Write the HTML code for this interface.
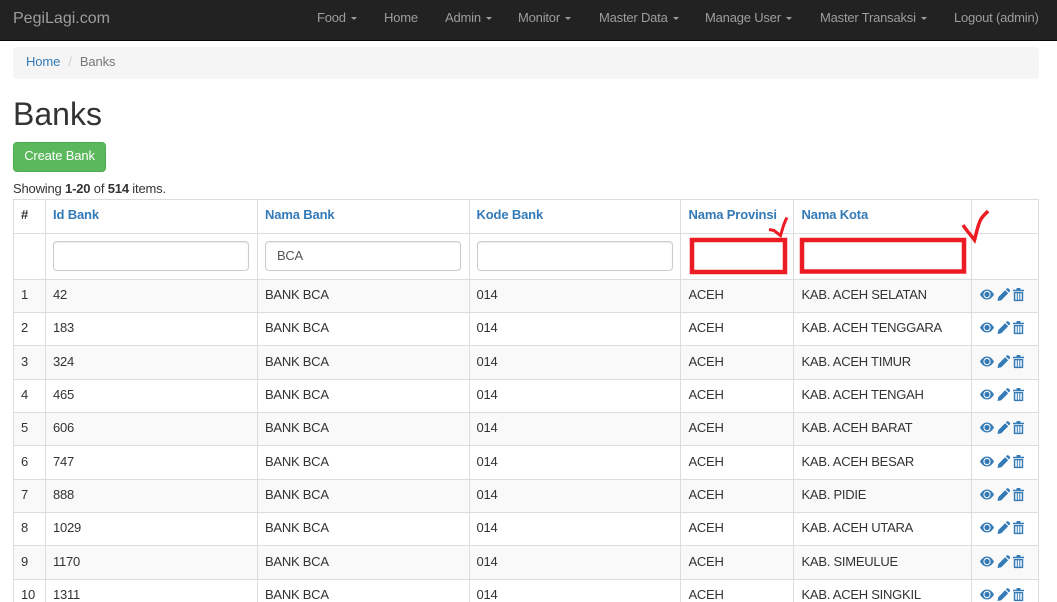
<!DOCTYPE html>
<html><head><meta charset="utf-8"><title>Banks</title>
<style>
*{box-sizing:border-box}
html,body{margin:0;padding:0;width:1057px;height:602px;overflow:hidden;background:#fff}
body{font:13px/20px "Liberation Sans",Arial,sans-serif;letter-spacing:-.25px;color:#333;position:relative}
a{color:#337ab7;text-decoration:none}
.nav{position:absolute;left:0;top:0;width:1057px;height:41px;background:#222;border-bottom:1px solid #080808}
.nav span{position:absolute;top:8px;color:#9d9d9d;white-space:nowrap;letter-spacing:-.2px}
.nav .brand{left:13px;top:9px;font-size:16px;letter-spacing:0}
.caret{display:inline-block;width:0;height:0;margin-left:2px;vertical-align:middle;border-top:3px solid #9d9d9d;border-left:3px solid transparent;border-right:3px solid transparent}
.crumb{position:absolute;left:13px;top:47px;width:1026px;height:32px;background:#f5f5f5;border-radius:4px;padding:5px 13px;color:#777;letter-spacing:-.1px}
.crumb i{font-style:normal;color:#ccc;padding:0 4.500px}
h1{position:absolute;left:13px;top:94px;margin:0;font-size:32px;line-height:40px;font-weight:500;letter-spacing:0;font-family:"Liberation Sans",Arial,sans-serif}
.btn{position:absolute;left:13px;top:142px;width:93px;height:30px;background:#5cb85c;border:1px solid #4cae4c;border-radius:4px;color:#fff;text-align:center;line-height:26px;letter-spacing:-.15px}
.sum{position:absolute;left:13px;top:179px;letter-spacing:-.18px}
table{position:absolute;left:13px;top:199px;width:1025px;border-collapse:collapse;table-layout:fixed}
td,th{border:1px solid #ddd;padding:0 0 0 7px;text-align:left;white-space:nowrap;overflow:hidden;font-weight:normal;vertical-align:middle}
td:nth-child(n+5),th:nth-child(n+5){padding-left:7.500px}
th{font-weight:bold;height:34px;padding-bottom:4px;letter-spacing:-.15px}
tr.f td{height:46px}
tr.r td{height:33px;padding-top:0;padding-bottom:2px}
tr.r.t td{height:34px}
tr.o td{background:#f9f9f9}
.inp{height:30px;width:196px;border:1px solid #ccc;border-radius:4px;background:#fff;padding:4px 11px;color:#555;box-shadow:inset 0 1px 1px rgba(0,0,0,.075);margin-top:-1px}
.ic{display:block;margin-left:.500px;position:relative;top:-.500px}
svg.o{position:absolute;left:0;top:0}
</style></head><body>
<div class="nav">
<span class="brand">PegiLagi.com</span>
<span style="left:317px">Food <b class="caret"></b></span>
<span style="left:384px">Home</span>
<span style="left:445px">Admin <b class="caret"></b></span>
<span style="left:518px">Monitor <b class="caret"></b></span>
<span style="left:599px">Master Data <b class="caret"></b></span>
<span style="left:705px">Manage User <b class="caret"></b></span>
<span style="left:820px">Master Transaksi <b class="caret"></b></span>
<span style="left:954px">Logout (admin)</span>
</div>
<div class="crumb"><a href="#">Home</a> <i>/</i> Banks</div>
<h1>Banks</h1>
<div class="btn">Create Bank</div>
<div class="sum">Showing <b>1-20</b> of <b>514</b> items.</div>
<svg width="0" height="0" style="position:absolute"><defs>
<g id="acts" fill="#337ab7">
<path fill-rule="evenodd" d="M0 7.500C2 4 4.400 2.500 7 2.500s5 1.500 7 5c-2 3.500-4.400 5-7 5s-5-1.500-7-5zM7 3.800a3.700 3.700 0 1 0 0 7.400 3.700 3.700 0 0 0 0-7.400z"/>
<path d="M1.800 7.500c.7-1 1.400-1.800 2.300-2.400a4.500 4.500 0 0 0 0 4.800C3.200 9.300 2.500 8.500 1.800 7.500zM9.900 5.100c.9.600 1.600 1.400 2.300 2.400-.7 1-1.400 1.800-2.300 2.400a4.500 4.500 0 0 0 0-4.800z"/>
<circle cx="7" cy="7.500" r="2.600"/>
<path d="M17 14l.8-3.900 6.800-6.900 3.100 3.100-6.900 6.900zM25.400 2.400l.9-.9c.5-.5 1.200-.5 1.700 0l1.300 1.300c.5.500.5 1.200 0 1.700l-.9.900z" transform="translate(.5 0)"/>
<path d="M33 2.800h3.500V1.800c0-.5.300-.8.800-.8h2.400c.5 0 .8.300.8.800v1H44v1.400H33zM33.800 5h9.400v8.300c0 .5-.3.800-.8.800h-7.800c-.5 0-.8-.3-.8-.8zM35.300 6.300v6.500h1.500V6.300zM37.800 6.300v6.500h1.500V6.300zM40.300 6.300v6.500h1.500V6.300z"/>
</g></defs></svg>
<table>
<colgroup><col style="width:32px"><col style="width:212px"><col style="width:211.500px"><col style="width:211.500px"><col style="width:113px"><col style="width:178px"><col style="width:67px"></colgroup>
<tr><th>#</th><th><a href="#">Id Bank</a></th><th><a href="#">Nama Bank</a></th><th><a href="#">Kode Bank</a></th><th><a href="#">Nama Provinsi</a></th><th><a href="#">Nama Kota</a></th><th></th></tr>
<tr class="f"><td></td><td><div class="inp"></div></td><td><div class="inp">BCA</div></td><td><div class="inp"></div></td><td></td><td></td><td></td></tr>
<tr class="r o"><td>1</td><td>42</td><td>BANK BCA</td><td>014</td><td>ACEH</td><td>KAB. ACEH SELATAN</td><td><svg class="ic" width="46" height="15"><use href="#acts"/></svg></td></tr>
<tr class="r"><td>2</td><td>183</td><td>BANK BCA</td><td>014</td><td>ACEH</td><td>KAB. ACEH TENGGARA</td><td><svg class="ic" width="46" height="15"><use href="#acts"/></svg></td></tr>
<tr class="r o t"><td>3</td><td>324</td><td>BANK BCA</td><td>014</td><td>ACEH</td><td>KAB. ACEH TIMUR</td><td><svg class="ic" width="46" height="15"><use href="#acts"/></svg></td></tr>
<tr class="r"><td>4</td><td>465</td><td>BANK BCA</td><td>014</td><td>ACEH</td><td>KAB. ACEH TENGAH</td><td><svg class="ic" width="46" height="15"><use href="#acts"/></svg></td></tr>
<tr class="r o"><td>5</td><td>606</td><td>BANK BCA</td><td>014</td><td>ACEH</td><td>KAB. ACEH BARAT</td><td><svg class="ic" width="46" height="15"><use href="#acts"/></svg></td></tr>
<tr class="r t"><td>6</td><td>747</td><td>BANK BCA</td><td>014</td><td>ACEH</td><td>KAB. ACEH BESAR</td><td><svg class="ic" width="46" height="15"><use href="#acts"/></svg></td></tr>
<tr class="r o"><td>7</td><td>888</td><td>BANK BCA</td><td>014</td><td>ACEH</td><td>KAB. PIDIE</td><td><svg class="ic" width="46" height="15"><use href="#acts"/></svg></td></tr>
<tr class="r"><td>8</td><td>1029</td><td>BANK BCA</td><td>014</td><td>ACEH</td><td>KAB. ACEH UTARA</td><td><svg class="ic" width="46" height="15"><use href="#acts"/></svg></td></tr>
<tr class="r o t"><td>9</td><td>1170</td><td>BANK BCA</td><td>014</td><td>ACEH</td><td>KAB. SIMEULUE</td><td><svg class="ic" width="46" height="15"><use href="#acts"/></svg></td></tr>
<tr class="r"><td>10</td><td>1311</td><td>BANK BCA</td><td>014</td><td>ACEH</td><td>KAB. ACEH SINGKIL</td><td><svg class="ic" width="46" height="15"><use href="#acts"/></svg></td></tr>
</table>
<svg class="o" width="1057" height="602" fill="none" stroke="#ed1c24">
<rect x="692" y="240" width="93" height="32" stroke-width="4.500"/>
<rect x="802" y="240" width="162" height="31.500" stroke-width="4.500"/>
<path d="M769 229.500l5 1 6.500 5c2-6 3-12 6.500-18" stroke-width="3"/>
<path d="M963 225c3 5 8 10 11.500 15 2-7 3-14 6-20 2-4 5-6 7.500-9" stroke-width="3.500"/>
</svg>
</body></html>
